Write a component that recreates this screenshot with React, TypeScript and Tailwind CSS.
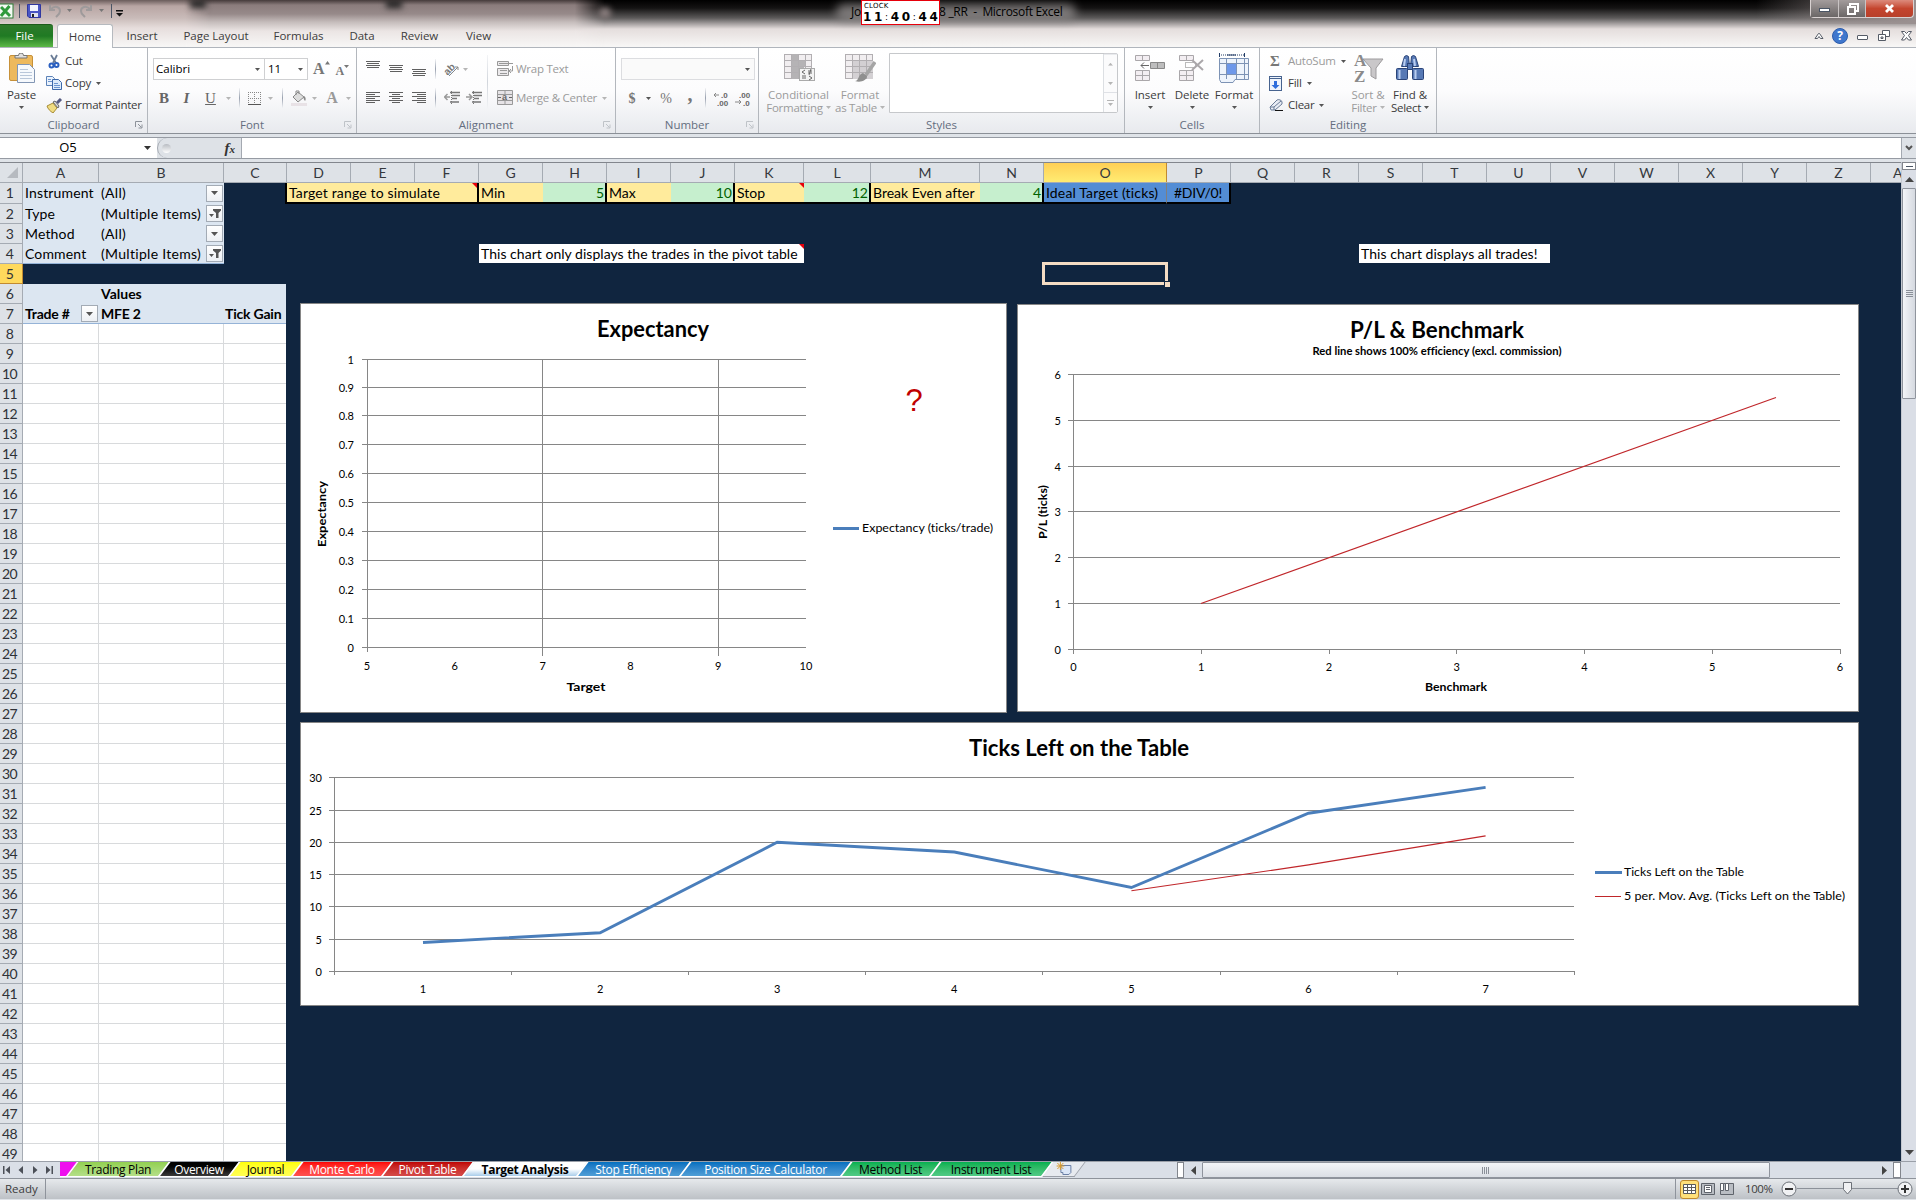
import type { ReactNode } from 'react'

const COLUMNS = [
  { name: 'A', w: 76 }, { name: 'B', w: 125 }, { name: 'C', w: 63 }, { name: 'D', w: 64 },
  { name: 'E', w: 64 }, { name: 'F', w: 64 }, { name: 'G', w: 64 }, { name: 'H', w: 64 },
  { name: 'I', w: 64 }, { name: 'J', w: 64 }, { name: 'K', w: 69 }, { name: 'L', w: 67 },
  { name: 'M', w: 109 }, { name: 'N', w: 64 }, { name: 'O', w: 123 }, { name: 'P', w: 64 },
  { name: 'Q', w: 64 }, { name: 'R', w: 64 }, { name: 'S', w: 64 }, { name: 'T', w: 64 },
  { name: 'U', w: 64 }, { name: 'V', w: 64 }, { name: 'W', w: 64 }, { name: 'X', w: 64 },
  { name: 'Y', w: 64 }, { name: 'Z', w: 64 }, { name: 'AA', w: 64 },
]

const SHEETS = [
  { name: '', w: 'w-[13px]', color: 'bg-[#ee10ee]' },
  { name: 'Trading Plan', w: 'w-[92px]', color: 'bg-gradient-to-b from-[#92d050] to-[#b4df88] text-black' },
  { name: 'Overview', w: 'w-[70px]', color: 'bg-gradient-to-b from-black to-[#3a3a3a] text-white' },
  { name: 'Journal', w: 'w-[63px]', color: 'bg-gradient-to-b from-[#ffff00] to-[#ffff50] text-black' },
  { name: 'Monte Carlo', w: 'w-[90px]', color: 'bg-gradient-to-b from-[#ff0000] to-[#ff5050] text-white' },
  { name: 'Pivot Table', w: 'w-[81px]', color: 'bg-gradient-to-b from-[#c00000] to-[#d54a4a] text-white' },
  { name: 'Target Analysis', w: 'w-[114px]', color: 'bg-gradient-to-b from-white via-white to-[#a9cdea] text-black font-bold' },
  { name: 'Stop Efficiency', w: 'w-[103px]', color: 'bg-gradient-to-b from-[#0070c0] to-[#4f9ed6] text-white' },
  { name: 'Position Size Calculator', w: 'w-[161px]', color: 'bg-gradient-to-b from-[#0070c0] to-[#4f9ed6] text-white' },
  { name: 'Method List', w: 'w-[89px]', color: 'bg-gradient-to-b from-[#00b050] to-[#50ca85] text-black' },
  { name: 'Instrument List', w: 'w-[112px]', color: 'bg-gradient-to-b from-[#00b050] to-[#50ca85] text-black' },
]

const UI = "font-['Open_Sans',sans-serif]"

function Caret({ dim = false, className = '' }: { dim?: boolean; className?: string }) {
  return (
    <svg width="5" height="3" className={`shrink-0 ${className}`}>
      <path d="M0 0h5L2.500 3z" fill={dim ? '#b5b5b5' : '#555'} />
    </svg>
  )
}

function Slot({ w, children }: { w: string; children?: ReactNode }) {
  return <div className={`${w} shrink-0 h-full flex items-center justify-center`}>{children}</div>
}

function Sep() {
  return <div className="w-px h-5 bg-gradient-to-b from-gray-100 via-gray-400 to-gray-100" />
}

function Group({ w, label, launcher, dim, children }: { w: string; label: string; launcher?: boolean; dim?: boolean; children: ReactNode }) {
  return (
    <div className={`${w} shrink-0 h-full flex flex-col border-r border-[#b3b7bd] relative`}>
      <div className="h-[69px] flex">{children}</div>
      <div className="h-[15px] flex items-center justify-center text-[11.5px] text-[#646d7e]">{label}</div>
      {launcher && (
        <svg width="8" height="8" className="absolute right-1 bottom-1" fill="none" stroke={dim ? '#bfc3c8' : '#8d929a'}>
          <path d="M.5 6V.5H7M3 3l3.500 3.500M7 3.500v3.500H3.500" />
        </svg>
      )}
    </div>
  )
}

function Lines({ rows, className = '' }: { rows: number[][]; className?: string }) {
  return (
    <svg width="14" height="12" className={className}>
      {rows.map(([x, w], i) => (
        <rect key={i} x={x} y={i * 2 + (rows.length === 4 ? 2 : 0)} width={w} height="1" fill="#606060" />
      ))}
    </svg>
  )
}

function GridIcon({ children }: { children?: ReactNode }) {
  return (
    <svg width="32" height="32" viewBox="0 0 32 32">
      <rect x="1.500" y="1.500" width="27" height="24" fill="#f1eef0" stroke="#b2afb2" />
      {children}
      <path d="M8.500 1v25M15.500 1v25M22.500 1v25M1 7.500h28M1 13.500h28M1 19.500h28" stroke="#b2afb2" />
    </svg>
  )
}

function BigButton({ w, icon, top, bottom, dim }: { w: string; icon: ReactNode; top: string; bottom?: string; dim?: boolean }) {
  return (
    <div className={`${w} shrink-0 flex flex-col items-center pt-[5px] text-[11.5px] leading-[13px] tracking-[-0.05px] ${dim ? 'text-[#9b9b9b]' : 'text-[#3b3b3b]'}`}>
      <div className="h-[35px]">{icon}</div>
      <div className="whitespace-nowrap">{top}</div>
      <div className="flex items-center gap-[3px] h-[13px] whitespace-nowrap tracking-[-0.25px]">
        {bottom}
        <Caret dim={dim} />
      </div>
    </div>
  )
}

function SmallButton({ icon, label, caret, dim }: { icon: ReactNode; label: string; caret?: boolean; dim?: boolean }) {
  return (
    <div className={`h-[22px] flex items-center text-[11.5px] tracking-[-0.25px] whitespace-nowrap ${dim ? 'text-[#9b9b9b]' : 'text-[#3b3b3b]'}`}>
      <div className="w-[19px] shrink-0">{icon}</div>
      {label}
      {caret && <Caret className="ml-[5px]" />}
    </div>
  )
}

function TitleBar() {
  return (
    <div className="h-6 relative flex items-center justify-between">
      <div className="flex items-center h-full pb-[2px]">
        <svg width="14" height="16" viewBox="0 0 14 16">
          <rect x="-3" y="1" width="16" height="14" fill="#f3faf3" stroke="#2c7b35" />
          <path d="M1 4l9 9M9.500 3L1 13" stroke="#2f9a3c" strokeWidth="3" />
        </svg>
        <div className="w-px h-3.5 bg-gray-600 ml-[5px]" />
        <svg width="14" height="14" viewBox="0 0 14 14" className="ml-[7px]">
          <path d="M.5.5h13v13H2l-1.500-1.500z" fill="#4a56c4" stroke="#3037a0" />
          <rect x="3" y="1" width="8" height="6" fill="#f3f5ff" />
          <rect x="4" y="9" width="7" height="4" fill="#dfe3ee" />
          <rect x="5" y="10" width="2" height="3" fill="#222" />
        </svg>
        <svg width="60" height="14" viewBox="0 0 60 14" className="ml-[8px]" fill="none" stroke="#9e9a9b" strokeWidth="2">
          <path d="M2 5c4-4 9-2 9 2 0 3-2 4-4 6M1 1v5h5M41 5c-4-4-9-2-9 2 0 3 2 4 4 6M42 1v5h-5" />
          <path d="M18 5h5l-2.500 3zM50 5h5l-2.500 3z" fill="#777" stroke="none" />
        </svg>
        <div className="w-px h-3.5 bg-gray-600 ml-[2px]" />
        <svg width="7" height="7" className="ml-[4px] mt-1"><path d="M0 0h7v1.500H0zM0 3h7L3.500 6.500z" fill="#111" /></svg>
      </div>
      <div className="absolute left-[836px] top-[4px] w-[240px] h-[17px] rounded-full bg-[#8d8989] opacity-80 blur-[5px]" />
      <div className={`absolute left-[851px] top-[3px] ${UI} text-[12px] leading-[18px] tracking-[-0.3px] text-black flex`}>
        <span className="w-[88px]">Jo</span>
        <span className="whitespace-pre">8 _RR  -  Microsoft Excel</span>
      </div>
      <div className="absolute left-[861px] top-0 w-[79px] h-[25px] bg-white border border-red-600 text-black">
        <div className="font-['DejaVu_Sans',sans-serif] text-[7px] leading-[8px] pl-[2px] pt-[1px] tracking-[0.2px]">CLOCK</div>
        <div className="font-['DejaVu_Sans',sans-serif] font-bold text-[12px] leading-[14px] px-[1px] flex justify-between">
          <span>1</span><span>1</span><span className="font-normal text-[9px]">:</span><span>4</span><span>0</span><span className="font-normal text-[9px]">:</span><span>4</span><span>4</span>
        </div>
      </div>
      <div className="absolute right-[2px] top-0 h-[18px] flex border border-t-0 border-[#d9d2d2] rounded-b">
        <div className="w-[28px] flex items-end justify-center pb-[5px] bg-gradient-to-b from-[#a39c9c] to-[#6b6767] border-r border-[#c9c4c4]">
          <div className="w-[11px] h-[4px] bg-white border border-gray-600" />
        </div>
        <div className="w-[27px] flex items-center justify-center bg-gradient-to-b from-[#a39c9c] to-[#6b6767] border-r border-[#c9c4c4]">
          <svg width="13" height="12" fill="none" stroke="#fff" strokeWidth="2"><path d="M4 3V1h8v7h-2M2 4h7v7H2z" /></svg>
        </div>
        <div className="w-[47px] flex items-center justify-center rounded-br bg-gradient-to-b from-[#dc8a7c] via-[#c4452e] to-[#b8402b]">
          <svg width="11" height="9" stroke="#fff" strokeWidth="2.800"><path d="M2 1l7 7M9 1L2 8" /></svg>
        </div>
      </div>
    </div>
  )
}

function TabRow() {
  return (
    <div className="h-[23px] flex items-end text-[11.5px] text-[#3c3c3c] relative">
      <div className="w-[53px] h-[23px] rounded-tr-[3px] bg-gradient-to-b from-[#2d7a2b] via-[#1f7a23] to-[#5cb947] border-t border-[#1d5c1c] text-white flex items-center justify-center pr-1">File</div>
      <div className="ml-1 w-[56px] h-[24px] -mb-px rounded-t-[3px] bg-white border border-b-0 border-[#b6babf] flex items-center justify-center relative">Home</div>
      <div className="h-full flex items-center">
        <span className="w-[58px] text-center">Insert</span>
        <span className="w-[90px] text-center">Page Layout</span>
        <span className="w-[75px] text-center">Formulas</span>
        <span className="w-[52px] text-center">Data</span>
        <span className="w-[63px] text-center">Review</span>
        <span className="w-[55px] text-center">View</span>
      </div>
      <div className="ml-auto h-full flex items-center pr-[4px]">
        <svg width="10" height="8" fill="#fff" stroke="#555b66"><path d="M1 6.500l3.500-5h1l3.500 5H6.500L5 4.500 3.500 6.500z" /></svg>
        <div className="ml-[8px] w-4 h-4 rounded-full bg-[#3f77cd] border border-[#2c5cab] text-white font-bold text-[12px] leading-[14px] text-center">?</div>
        <div className="ml-[9px] mt-1 w-[11px] h-[5px] border border-[#555b66] bg-white rounded-[1px]" />
        <svg width="12" height="12" className="ml-[10px]" fill="#fff" stroke="#555b66"><path d="M4.500.5h7v6h-7z" /><path d="M.5 4.500h7v6h-7zM3 7h2v1.500H3z" /></svg>
        <svg width="11" height="10" className="ml-[11px]" fill="#fff" stroke="#555b66"><path d="M.5.5h3l2 2 2-2h3L7.500 4.500l3 4.500h-3l-2-2.500-2 2.500h-3l3-4.500z" /></svg>
      </div>
    </div>
  )
}

function FontGroup() {
  return (
    <Group w="w-[209px]" label="Font" launcher dim>
      <div className="flex flex-col pl-[5px] pt-[10px]">
        <div className="h-[22px] flex items-center text-[11.5px] text-black">
          <div className="w-[112px] h-[22px] border border-[#cfd0d2] bg-white flex items-center justify-between pl-[2px] pr-[4px]">Calibri<Caret /></div>
          <div className="w-[43px] h-[22px] border border-l-0 border-[#cfd0d2] bg-white flex items-center justify-between pl-[3px] pr-[4px]">11<Caret /></div>
          <div className="ml-[5px] font-['Liberation_Serif',serif] font-bold text-[16px] leading-none text-[#777] flex">A<svg width="5" height="4"><path d="M0 3.500h5L2.500 0z" fill="#777" /></svg></div>
          <div className="ml-[6px] mt-1 font-['Liberation_Serif',serif] font-bold text-[12px] leading-none text-[#777] flex">A<svg width="5" height="4"><path d="M0 0h5L2.500 3z" fill="#777" /></svg></div>
        </div>
        <div className="h-[22px] mt-[7px] flex items-center font-['Liberation_Serif',serif] text-[15px] text-[#666]">
          <Slot w="w-[22px]"><b>B</b></Slot>
          <Slot w="w-[23px]"><b><i>I</i></b></Slot>
          <Slot w="w-[25px]"><span className="underline">U</span></Slot>
          <Slot w="w-[10px]"><Caret dim /></Slot>
          <Slot w="w-[12px]"><Sep /></Slot>
          <Slot w="w-[18px]"><svg width="13" height="13" stroke="#888" fill="none"><path d="M.5 0v12M6.500 0v12M12.500 0v12M0 .5h13M0 6.500h13" strokeDasharray="1 1" /><path d="M0 12.500h13" stroke="#555" /></svg></Slot>
          <Slot w="w-[14px]"><Caret dim /></Slot>
          <Slot w="w-[10px]"><Sep /></Slot>
          <Slot w="w-[23px]"><svg width="16" height="16"><path d="M2 7l5-5 6 5-6 5z" fill="#ddd" stroke="#888" /><path d="M5 5V1h3v3" fill="none" stroke="#888" /><path d="M13 6c2 1 2 4 1 5-1-1-2-3-1-5z" fill="#888" /><rect y="13" width="16" height="3" fill="#e8e2e6" /></svg></Slot>
          <Slot w="w-[9px]"><Caret dim /></Slot>
          <Slot w="w-[26px]"><b className="text-[16px] text-[#999]">A</b></Slot>
          <Slot w="w-[6px]"><Caret dim /></Slot>
        </div>
      </div>
    </Group>
  )
}

function Indent({ flip }: { flip?: boolean }) {
  return (
    <svg width="16" height="14" fill="none" stroke="#777">
      <path d="M6 1.500h10M8 4.500h8M8 7.500h5M6 11h9" strokeWidth="1.500" />
      <path d="M7.500 0v14" strokeDasharray="1 1" />
      <path d={flip ? 'M0 6h5M3 3l3 3-3 3' : 'M1 6h5M3.500 3l-3 3 3 3'} stroke="#999" strokeWidth="1.500" />
    </svg>
  )
}

function AlignmentGroup() {
  const full = [[0, 14], [1, 12], [0, 14], [1, 12]]
  return (
    <Group w="w-[259px]" label="Alignment" launcher dim>
      <div className="flex flex-col pl-[4px] pt-[10px] w-[130px]">
        <div className="h-[22px] flex items-center">
          <Slot w="w-[23px]"><Lines rows={full} className="-mt-2" /></Slot>
          <Slot w="w-[23px]"><Lines rows={full} /></Slot>
          <Slot w="w-[23px]"><Lines rows={full} className="mt-2" /></Slot>
          <Slot w="w-[10px]"><Sep /></Slot>
          <Slot w="w-[22px]">
            <svg width="17" height="16" className="overflow-visible"><text x="1" y="12" transform="rotate(-45 6 9)" fontSize="10" fontWeight="bold" fill="#777" fontFamily="Liberation Sans">ab</text><path d="M6 15L15 6M12 6h3v3" stroke="#888" fill="none" /></svg>
          </Slot>
          <Slot w="w-[6px]"><Caret dim /></Slot>
        </div>
        <div className="h-[22px] mt-[7px] flex items-center">
          <Slot w="w-[23px]"><Lines rows={[[0, 14], [0, 9], [0, 14], [0, 9], [0, 14], [0, 9]]} /></Slot>
          <Slot w="w-[23px]"><Lines rows={[[0, 14], [3, 8], [0, 14], [3, 8], [0, 14], [3, 8]]} /></Slot>
          <Slot w="w-[23px]"><Lines rows={[[0, 14], [5, 9], [0, 14], [5, 9], [0, 14], [5, 9]]} /></Slot>
          <Slot w="w-[10px]"><Sep /></Slot>
          <Slot w="w-[24px]"><Indent /></Slot>
          <Slot w="w-[20px]"><Indent flip /></Slot>
        </div>
      </div>
      <div className="mt-[7px] w-px h-[54px] bg-gradient-to-b from-gray-100 via-gray-300 to-gray-100" />
      <div className="pl-[9px] pt-[10px] flex flex-col gap-[7px]">
        <SmallButton dim label="Wrap Text" icon={
          <svg width="16" height="16" fill="#eceaec" stroke="#999"><path d="M.5.5h11v4H.5zM.5 7.500h11v7H.5z" /><path d="M2 2.500h14M3 9.500h7M3 12.500h7M15.500 5v5h-3M14 8l-2 2 2 2" fill="none" /></svg>
        } />
        <div className="flex items-center">
          <SmallButton dim label="Merge & Center" icon={
            <svg width="16" height="16" fill="#e6e3e6" stroke="#999"><path d="M.5.5h15v14H.5zM.5 4.500h15M.5 10.500h15M8 0v4M8 11v4" /><path d="M1 7.500h3M12 7.500h3" stroke="#666" /><text x="5" y="10" fontSize="9" fontWeight="bold" fill="#666" stroke="none" fontFamily="Liberation Sans">a</text></svg>
          } />
          <Caret dim className="ml-[5px]" />
        </div>
      </div>
    </Group>
  )
}

function NumberGroup() {
  return (
    <Group w="w-[143px]" label="Number" launcher dim>
      <div className="pl-[5px] pt-[10px]">
        <div className="w-[134px] h-[22px] border border-[#dcdde0] bg-[#fafafa] flex items-center justify-end pr-[4px]"><Caret /></div>
        <div className="h-[22px] mt-[7px] flex items-center font-['Liberation_Serif',serif] text-[14px] text-[#777]">
          <Slot w="w-[22px]"><b>$</b></Slot>
          <Slot w="w-[10px]"><Caret /></Slot>
          <Slot w="w-[26px]">%</Slot>
          <Slot w="w-[22px]"><b className="text-[20px] -mt-2">,</b></Slot>
          <Slot w="w-[8px]"><Sep /></Slot>
          <Slot w="w-[24px]"><svg width="16" height="15" className="overflow-visible" fill="#666" fontFamily="Liberation Sans" fontSize="8" fontWeight="bold"><text x="8" y="7">.0</text><text x="4" y="15">.00</text><path d="M1 4h5M3 2L1 4l2 2" fill="none" stroke="#888" /></svg></Slot>
          <Slot w="w-[20px]"><svg width="16" height="15" className="overflow-visible" fill="#666" fontFamily="Liberation Sans" fontSize="8" fontWeight="bold"><text x="4" y="7">.00</text><text x="8" y="15">.0</text><path d="M0 11h6M4 9l2 2-2 2" fill="none" stroke="#888" /></svg></Slot>
        </div>
      </div>
    </Group>
  )
}

function Ribbon() {
  return (
    <div className="h-[87px] flex border-y border-[#b0b5bc] border-b-[#8b9097] bg-gradient-to-b from-white via-[#fcfcfd] to-[#e8eaee] text-[#3b3b3b]">
      <Group w="w-[148px]" label="Clipboard" launcher>
        <BigButton w="w-[43px]" top="Paste" icon={
          <svg width="28" height="32" viewBox="0 0 28 32">
            <rect x="1.500" y="2.500" width="23" height="25" rx="1.500" fill="#edb95d" stroke="#c79139" />
            <path d="M7 5V2.500h3.500a2.500 2.500 0 0 1 5 0H19V5z" fill="#e0e0e0" stroke="#777" />
            <path d="M9.500 11.500h12l5 5v13h-17z" fill="#f6f9fd" stroke="#8296b4" />
            <path d="M12 16.500h8M12 19.500h12M12 22.500h12M12 25.500h12" stroke="#b9c7da" />
          </svg>
        } />
        <div className="flex flex-col pl-[3px] pt-[2px]">
          <SmallButton label="Cut" icon={
            <svg width="14" height="15" className="ml-[2px]" fill="none"><path d="M3 1l5 8M9 1L5 9" stroke="#6a7c96" strokeWidth="1.800" /><circle cx="3.500" cy="11.500" r="2" stroke="#2a5fc0" strokeWidth="2" /><circle cx="8.500" cy="11" r="2" stroke="#2a5fc0" strokeWidth="2" /></svg>
          } />
          <SmallButton caret label="Copy" icon={
            <svg width="16" height="14"><path d="M.5.5h6l2 2v7h-8z" fill="#eaf2fc" stroke="#5c82b8" /><path d="M6.500 3.500h6l3 3v7h-9z" fill="#dcebfb" stroke="#3d68a8" /><path d="M2 3.500h3M2 5.500h4M8 7.500h4M8 9.500h6M8 11.500h6" stroke="#6a94cf" /></svg>
          } />
          <SmallButton label="Format Painter" icon={
            <svg width="17" height="15"><path d="M1 8l6-3 4 5-4 5C4 13 2 11 1 8z" fill="#f0dc82" stroke="#a78c35" /><path d="M7 4l2-1 4 5-1 2z" fill="#ddd" stroke="#666" /><path d="M11 5l4-4" stroke="#555a80" strokeWidth="3" /></svg>
          } />
        </div>
      </Group>
      <FontGroup />
      <AlignmentGroup />
      <NumberGroup />
      <Group w="w-[366px]" label="Styles">
        <div className="w-[7px]" />
        <BigButton dim w="w-[65px]" top="Conditional" bottom="Formatting" icon={
          <div className="relative">
            <GridIcon><path d="M9 1h6v25H9zM16 8h6v5h-6zM16 14h5v5h-5z" fill="#b5b3b5" /></GridIcon>
            <svg width="16" height="14" className="absolute right-0 top-[15px]"><rect x=".5" y=".5" width="15" height="12" fill="#f3f3f3" stroke="#aaa" /><path d="M6 2L3 4l3 2M3 8h4M3 10h4M9 3h4M9 5h4M12 1l-2 6M10 8l3 2-3 2" stroke="#666" fill="none" /></svg>
          </div>
        } />
        <BigButton dim w="w-[58px]" top="Format" bottom="as Table" icon={
          <div className="relative">
            <GridIcon><path d="M9 8h20v18H9z" fill="#d3d0d3" /></GridIcon>
            <svg width="22" height="22" className="absolute right-0 top-[8px]"><path d="M21 1L12 14" stroke="#a5a5a5" strokeWidth="3.500" /><path d="M1 20c4 0 3-7 8-8l4 3c0 4-6 7-12 5z" fill="#8f8f8f" /></svg>
          </div>
        } />
        <div className="mt-[5px] w-[229px] h-[60px] border border-[#c6c8cb] bg-white flex rounded-r-[2px]">
          <div className="flex-1" />
          <div className="w-[14px] border-l border-[#dcdfe3] flex flex-col divide-y divide-[#dfe1e6] bg-[#fbfbfc]">
            <div className="flex-1 flex items-center justify-center rotate-180"><Caret dim /></div>
            <div className="flex-1 flex items-center justify-center"><Caret dim /></div>
            <div className="flex-1 flex flex-col gap-[2px] items-center justify-center"><div className="w-[7px] h-px bg-[#b5b5b5]" /><Caret dim /></div>
          </div>
        </div>
      </Group>
      <Group w="w-[135px]" label="Cells">
        <div className="w-[4px]" />
        <BigButton w="w-[42px]" top="Insert" icon={
          <svg width="32" height="32" viewBox="0 0 32 32" fill="#f3eef2" stroke="#aaa7aa">
            <path d="M1.500 2.500h14v5h-14zM8.500 2v6M1.500 17.500h14v10h-14zM8.500 17v11M1 22.500h15" /><path d="M16.500 9.500h14v6h-14z" fill="#bdbdbd" stroke="#888" /><path d="M23.500 9v7" stroke="#888" /><path d="M7 12.500h8M10 9.500l-3 3 3 3" fill="none" stroke="#666" />
          </svg>
        } />
        <BigButton w="w-[42px]" top="Delete" icon={
          <svg width="28" height="32" viewBox="0 0 28 32" fill="#f3eef2" stroke="#aaa7aa">
            <path d="M1.500 2.500h14v5h-14zM8.500 2v6M1.500 17.500h14v10h-14zM8.500 17v11M1 22.500h15" /><path d="M7.500 9.500h10v5h-10z" fill="none" strokeDasharray="1 1" stroke="#777" /><path d="M14 7l11 10M25 7L14 17" strokeWidth="2" />
          </svg>
        } />
        <BigButton w="w-[42px]" top="Format" icon={
          <svg width="32" height="32" viewBox="0 0 32 32" fill="#eef4fc" stroke="#7d93b5">
            <path d="M1.500 5.500h29v21H17l-2 3H3l-1.500-3z" /><path d="M9 11h9v11H9z" fill="#6d98ea" stroke="none" /><path d="M8.500 5v21M18.500 5v21M26.500 5v21M1 10.500h30M1 21.500h30" /><path d="M1.500 0v4M26.500 0v4M9 2h9" stroke="#223c66" /><path d="M3 2h23" strokeDasharray="1 1" stroke="#223c66" />
          </svg>
        } />
      </Group>
      <Group w="w-[177px]" label="Editing">
        <div className="flex flex-col pl-[9px] pt-[2px] w-[87px]">
          <SmallButton dim caret label="AutoSum" icon={<span className="font-['Liberation_Serif',serif] font-bold text-[15px] pl-[1px] text-[#777]">Σ</span>} />
          <SmallButton caret label="Fill" icon={<svg width="13" height="15"><rect x=".5" y=".5" width="12" height="14" fill="#eef4fc" stroke="#47638f" /><path d="M1 2.500h11" stroke="#47638f" /><path d="M5 5h3v4h2.500l-4 4-4-4H5z" fill="#2d6ddc" /></svg>} />
          <SmallButton caret label="Clear" icon={<svg width="15" height="14"><path d="M1 9l7-7c1-1 5 0 5 2v2l-7 6H2z" fill="#e8ecf4" stroke="#6b7c98" /><path d="M1 9h4l7-6M5 9v3" fill="none" stroke="#6b7c98" /><path d="M6 12.500h8" stroke="#111" /></svg>} />
        </div>
        <BigButton dim w="w-[42px]" top="Sort &" bottom="Filter" icon={
          <svg width="32" height="32" viewBox="0 0 32 32"><path d="M11 6h20l-7 9v11l-5-3v-8z" fill="#c9c7c9" stroke="#9d9b9d" /><g fontFamily="Liberation Serif" fontWeight="bold" fontSize="17" fill="#8a8a8a"><text x="2" y="13">A</text><text x="2" y="29">Z</text></g></svg>
        } />
        <BigButton w="w-[42px]" top="Find &" bottom="Select" icon={
          <svg width="28" height="30" viewBox="0 -1 28 30" fill="#5779b5" stroke="#2b4478">
            <path d="M8.500 2.500q2-2 4 0l1 10h-8zM15.500 2.500q2-2 4 0l3 10h-8z" /><rect x="11.500" y="9.500" width="5" height="6" /><rect x=".5" y="14.500" width="11" height="11" rx="1" /><rect x="16.500" y="14.500" width="11" height="11" rx="1" /><path d="M3.500 16v9M19.500 16v9M9 5l-1 7M18 5l1 7" stroke="#b9cdf0" strokeWidth="2" />
          </svg>
        } />
      </Group>
    </div>
  )
}

function FormulaBar() {
  return (
    <div className="h-[28px] bg-[#dfe3e8] pt-[3px] shrink-0">
      <div className="h-[22px] flex border-y border-[#969ba3] bg-[#dee2e7]">
        <div className="w-[157px] bg-white flex items-center text-[13px] text-black">
          <div className="w-[136px] text-center">O5</div>
          <svg width="7" height="4" className="ml-[8px]"><path d="M0 0h7L3.500 4z" fill="#333" /></svg>
        </div>
        <div className="w-[85px] border border-y-0 border-[#a4a9b1] rounded-l-[10px] flex items-center justify-between pl-[4px] pr-[6px]">
          <div className="w-[9px] h-[9px] rounded-full bg-gradient-to-b from-[#b8bcc2] to-white" />
          <div className="font-['Liberation_Serif',serif] italic font-bold text-[15px] leading-none text-[#333]">f<span className="text-[11px]">x</span></div>
        </div>
        <div className="flex-1 bg-white" />
        <div className="w-[15px] border-l border-[#a4a9b1] flex items-center justify-center">
          <svg width="8" height="6" fill="none" stroke="#555" strokeWidth="2"><path d="M1 1l3 3 3-3" /></svg>
        </div>
      </div>
    </div>
  )
}

function RowHead({ n }: { n: number }) {
  const sel = n === 5
  return (
    <div className={`w-[23px] shrink-0 border-r border-b flex items-center justify-center text-[14px] pr-[3px] tracking-[-0.5px] ${sel ? 'bg-[#ffd95c] border-[#c28a30]' : 'bg-[#dee2e7] border-[#a5abb3]'} text-[#2f3237]`}>
      {n}
    </div>
  )
}

function FilterButton({ funnel }: { funnel?: boolean }) {
  return (
    <div className="w-[17px] h-[17px] shrink-0 border border-[#a3abb5] bg-gradient-to-b from-white to-[#edf0f4] flex items-center justify-center">
      {funnel
        ? <svg width="12" height="9" fill="#555"><path d="M4 0h8v1.500L9.500 4v5H7V4L4 1.500zM0 5h5L2.500 8z" /></svg>
        : <svg width="7" height="4"><path d="M0 0h7L3.500 4z" fill="#555" /></svg>}
    </div>
  )
}

function Comment() {
  return <div className="absolute right-0 top-0 border-t-[5px] border-l-[5px] border-t-red-600 border-l-transparent" />
}

function Input({ w, name, value, vw, note }: { w: string; name: string; value?: string; vw?: string; note?: boolean }) {
  return (
    <>
      <div className={`${w} relative bg-[#ffeb9c] pl-[2px] border-b-2 border-black whitespace-nowrap ${value ? '' : 'border-r-2 tracking-[0.15px]'}`}>{name}{note && <Comment />}</div>
      {value && <div className={`${vw} bg-[#c6efce] text-[#006100] text-right pr-px border-b-2 border-r-2 border-black`}>{value}</div>}
    </>
  )
}

function SheetRow({ n }: { n: number }) {
  const filters = [['Instrument', '(All)'], ['Type', '(Multiple Items)'], ['Method', '(All)'], ['Comment', '(Multiple Items)']]
  const f = filters[n - 1]
  return (
    <div className={`flex shrink-0 leading-[20px] ${n === 1 ? 'h-[21px]' : 'h-5'}`}>
      <RowHead n={n} />
      {f && (
        <div className={`w-[201px] flex items-center bg-[#dce6f1] border-b pr-px ${n === 4 ? 'border-[#95b3d7]' : 'border-transparent'}`}>
          <div className="w-[76px] pl-[2px] tracking-[0.15px]">{f[0]}</div>
          <div className="flex-1 pl-[2px] whitespace-nowrap tracking-[0.3px]">{f[1]}</div>
          <FilterButton funnel={n % 2 === 0} />
        </div>
      )}
      {n === 1 && (
        <>
          <div className="w-[63px] border-r-2 border-black" />
          <Input w="w-[192px]" name="Target range to simulate" note />
          <Input w="w-[64px]" name="Min" vw="w-[64px]" value="5" />
          <Input w="w-[64px]" name="Max" vw="w-[64px]" value="10" />
          <Input w="w-[69px]" name="Stop" vw="w-[67px]" value="12" note />
          <Input w="w-[109px]" name="Break Even after" vw="w-[64px]" value="4" />
          <div className="w-[123px] bg-[#538dd5] border-b-2 border-b-black border-r border-r-[#7f7f7f] pl-[2px] whitespace-nowrap tracking-[0.15px]">Ideal Target (ticks)</div>
          <div className="w-[64px] bg-[#538dd5] border-b-2 border-r-2 border-black text-center tracking-[-0.2px]">#DIV/0!</div>
        </>
      )}
      {n === 4 && (
        <>
          <div className="ml-[255px] w-[325px] h-[19px] relative bg-white pl-[2px] tracking-[0.03px] leading-[19px] whitespace-nowrap">This chart only displays the trades in the pivot table<Comment /></div>
          <div className="ml-[555px] w-[191px] h-[19px] bg-white pl-[2px] leading-[19px] tracking-[0.04px]">This chart displays all trades!</div>
        </>
      )}
      {n === 6 && <div className="w-[263px] bg-[#dce6f1] font-bold pl-[78px]">Values</div>}
      {n === 7 && (
        <div className="w-[263px] bg-[#dce6f1] border-b border-[#95b3d7] font-bold flex items-center tracking-[-0.2px]">
          <div className="w-[58px] shrink-0 pl-[2px]">Trade #</div>
          <FilterButton />
          <div className="w-[127px] shrink-0 pl-[3px]">MFE 2</div>
          <div className="whitespace-nowrap">Tick Gain</div>
        </div>
      )}
      {n > 7 && (
        <div className="w-[263px] flex bg-white">
          <div className="w-[76px] border-r border-b border-[#d8dadc]" />
          <div className="w-[125px] border-r border-b border-[#d8dadc]" />
          <div className="w-[62px] border-b border-[#d8dadc]" />
        </div>
      )}
    </div>
  )
}

function Label({ x, y, children, w, size = 11, bold, anchor = 'middle', rotate }: { x: number; y: number; children: string; w?: number; size?: number; bold?: boolean; anchor?: 'start' | 'middle' | 'end'; rotate?: boolean }) {
  return (
    <text x={x} y={y} fontSize={size} fontWeight={bold ? 700 : 400} textAnchor={anchor} textLength={w} lengthAdjust="spacingAndGlyphs" transform={rotate ? `rotate(-90 ${x} ${y})` : undefined}>
      {children}
    </text>
  )
}

function ExpectancyChart() {
  return (
    <svg width="707" height="410" className="absolute left-[300px] top-[120px] bg-white border border-[#868686]">
      <Label x={352} y={33} size={22} w={112} bold>Expectancy</Label>
      {Array.from({ length: 11 }, (_, i) => {
        const y = Math.round(54.6 + i * 28.94) + 0.5 - (i > 0 ? 1 : 0)
        return (
          <g key={i}>
            <path d={`M61 ${y}H505`} stroke="#868686" />
            <Label x={53} y={y + 4} anchor="end">{String((10 - i) / 10)}</Label>
          </g>
        )
      })}
      <path d="M66.500 55v293M241.500 55v297M417.500 55v297" stroke="#868686" />
      {[5, 6, 7, 8, 9, 10].map((n, i) => <Label key={n} x={66 + i * 87.8} y={366}>{String(n)}</Label>)}
      <Label x={285} y={387} size={12} w={39} bold>Target</Label>
      <Label x={25} y={210} size={12} w={66} bold rotate>Expectancy</Label>
      <text x="613" y="107" fontSize="31" fill="#c00000" textAnchor="middle" fontFamily="Liberation Sans">?</text>
      <path d="M532 224.500h26" stroke="#4a7ebb" strokeWidth="3" />
      <Label x={561} y={228} w={131} anchor="start">Expectancy (ticks/trade)</Label>
    </svg>
  )
}

function BenchmarkChart() {
  return (
    <svg width="842" height="408" className="absolute left-[1017px] top-[121px] bg-white border border-[#868686]">
      <Label x={419} y={33} size={22} w={174} bold>P/L & Benchmark</Label>
      <Label x={419} y={50} size={11} w={249} bold>Red line shows 100% efficiency (excl. commission)</Label>
      {Array.from({ length: 7 }, (_, i) => {
        const y = Math.round(69 + i * 45.8) + 0.5
        const x = 55 + i * 127.75
        return (
          <g key={i}>
            <path d={`M50 ${y}H822`} stroke="#868686" />
            <path d={`M${Math.round(x) + 0.5} 344v5`} stroke="#868686" />
            <Label x={43} y={y + 4} anchor="end">{String(6 - i)}</Label>
            <Label x={x + 0.5} y={366}>{String(i)}</Label>
          </g>
        )
      })}
      <path d="M55.500 69v275" stroke="#868686" />
      <path d="M183 298.500L758 92.500" stroke="#c0262a" strokeWidth="1.200" />
      <Label x={438} y={386} size={11} w={62} bold>Benchmark</Label>
      <Label x={29} y={207} size={11} w={54} bold rotate>P/L (ticks)</Label>
    </svg>
  )
}

function TicksChart() {
  const base = 248.5
  const px = (i: number) => 122 + i * 177.1
  const py = (v: number) => base - v * 6.46
  const ticks = [4.5, 6, 20, 18.5, 13, 24.5, 28.5]
  const avg = [12.5, 16.5, 21]
  return (
    <svg width="1559" height="284" className="absolute left-[300px] top-[539px] bg-white border border-[#868686]">
      <Label x={778} y={33} size={22} w={220} bold>Ticks Left on the Table</Label>
      {Array.from({ length: 7 }, (_, i) => {
        const y = Math.floor(base - i * 32.3) + 0.5
        return (
          <g key={i}>
            <path d={`M28 ${y}H1273`} stroke="#868686" />
            <Label x={21} y={y + 4} anchor="end">{String(i * 5)}</Label>
            <Label x={px(i)} y={270}>{String(i + 1)}</Label>
          </g>
        )
      })}
      <path d="M33.500 55v194" stroke="#868686" />
      {Array.from({ length: 8 }, (_, i) => <path key={i} d={`M${Math.round(33 + i * 177.1) + 0.5} 248v4`} stroke="#868686" />)}
      <polyline points={ticks.map((v, i) => `${px(i)},${py(v)}`).join(' ')} fill="none" stroke="#4a7ebb" strokeWidth="2.900" />
      <polyline points={avg.map((v, i) => `${px(i + 4)},${py(v)}`).join(' ')} fill="none" stroke="#c0262a" strokeWidth="1.200" />
      <path d="M1294 149.500h27" stroke="#4a7ebb" strokeWidth="3" />
      <path d="M1294 173.500h26" stroke="#c0262a" />
      <Label x={1323} y={153} w={120} anchor="start">Ticks Left on the Table</Label>
      <Label x={1323} y={177} w={221} anchor="start">5 per. Mov. Avg. (Ticks Left on the Table)</Label>
    </svg>
  )
}

function VerticalScroll() {
  return (
    <div className="w-[15px] shrink-0 flex flex-col bg-[#dadee6] border-l border-[#c3c8d0]">
      <div className="h-[8px] border border-[#82868d] bg-white flex items-center justify-center"><div className="w-[7px] h-px bg-gray-600" /></div>
      <div className="h-[18px] flex items-center justify-center"><svg width="9" height="5"><path d="M0 5h9L4.500 0z" fill="#444" /></svg></div>
      <div className="h-[211px] border border-[#8f949d] rounded-[1px] bg-gradient-to-r from-[#f3f5f8] to-[#d5d9e0] flex items-center justify-center">
        <svg width="7" height="8" stroke="#8a8f98"><path d="M0 .5h7M0 2.500h7M0 4.500h7M0 6.500h7" /></svg>
      </div>
      <div className="flex-1" />
      <div className="h-[18px] flex items-center justify-center"><svg width="9" height="5"><path d="M0 0h9L4.500 5z" fill="#444" /></svg></div>
    </div>
  )
}

function Sheet() {
  return (
    <div className="h-[999px] shrink-0 flex font-['Lato',sans-serif] [font-variant-ligatures:none] text-[14px] text-black">
      <div className="w-[1901px] overflow-hidden">
        <div className="flex h-[21px] border-t border-b border-t-[#82868d] border-b-[#a5abb3] bg-[#dee2e7]">
          <div className="w-[23px] shrink-0 border-r border-[#a5abb3] flex items-end justify-end p-1">
            <svg width="11" height="11"><path d="M11 0v11H0z" fill="#b6bac0" /></svg>
          </div>
          {COLUMNS.map((c) => (
            <div key={c.name} style={{ width: c.w }} className={`shrink-0 border-r flex items-center justify-center ${c.name === 'O' ? 'bg-gradient-to-b from-[#ffcf55] to-[#ffec72] border-[#c28a30]' : 'border-[#a5abb3]'} text-[#35383d]`}>
              {c.name}
            </div>
          ))}
        </div>
        <div className="relative h-[978px] overflow-hidden bg-[#10253f]">
          {Array.from({ length: 49 }, (_, i) => <SheetRow key={i} n={i + 1} />)}
          <div className="absolute left-[1042px] top-[79px] w-[126px] h-[23px] border-[3px] border-[#f4dcc3]">
            <div className="absolute -right-[5px] -bottom-[5px] w-[6px] h-[6px] bg-[#f4dcc3] border-l border-t border-[#10253f]" />
          </div>
          {/* Charts float over the cells, offset from the top left of row 1 */}
          <ExpectancyChart />
          <BenchmarkChart />
          <TicksChart />
        </div>
      </div>
      <VerticalScroll />
    </div>
  )
}

function SheetTabs() {
  return (
    <div className="h-[17px] shrink-0 flex bg-[#dadfe7] border-t border-[#9a9fa8] text-[12px]">
      <svg width="60" height="16" fill="#4c5058" className="shrink-0">
        <path d="M3 4h1.500v8H3zM10 4v8L5.500 8zM23 4v8l-4.500-4zM33 4v8l4.500-4zM46 4v8l4.500-4zM51.500 4H53v8h-1.500z" />
      </svg>
      <div className="h-[16px] w-[1117px] shrink-0 overflow-hidden flex">
        {SHEETS.map((s) => (
          <div key={s.name} className={`${s.w} shrink-0 h-[15px] -skew-x-[37deg] border-r-2 border-b border-white ${s.name ? '' : 'shadow-[-12px_0_0_#ee10ee]'} ${s.color}`}>
            <div className="skew-x-[37deg] text-center leading-[15px] whitespace-nowrap tracking-[-0.3px]">{s.name}</div>
          </div>
        ))}
        <div className="w-[32px] h-[15px] -skew-x-[37deg] border-r border-b border-[#9a9fa8] bg-[#e7eaef] flex items-center justify-center">
          <svg width="16" height="14" className="skew-x-[37deg]"><path d="M4.500 3.500h10v7l-2 2h-6v-2h-2z" fill="#dbe6f7" stroke="#6a7fa5" /><path d="M4 0v8M0 4h8M1 1l6 6M7 1L1 7" stroke="#d99a2b" /></svg>
        </div>
      </div>
      <div className="w-[7px] h-[16px] border border-[#82868d] bg-white" />
      <div className="w-[18px] flex items-center justify-center"><svg width="5" height="9"><path d="M5 0v9L0 4.500z" fill="#444" /></svg></div>
      <div className="w-[568px] border border-[#8f949d] rounded-[1px] bg-gradient-to-b from-[#f3f5f8] to-[#dbdfe5] flex items-center justify-center">
        <svg width="8" height="7" stroke="#8a8f98"><path d="M.5 0v7M2.500 0v7M4.500 0v7M6.500 0v7" /></svg>
      </div>
      <div className="flex-1 flex items-center justify-end pr-[6px]"><svg width="5" height="9"><path d="M0 0v9l5-4.500z" fill="#444" /></svg></div>
      <div className="w-[8px] border border-[#82868d] bg-white" />
      <div className="w-[15px]" />
    </div>
  )
}

function StatusBar() {
  return (
    <div className="h-[21px] shrink-0 border-t border-[#8e939b] bg-gradient-to-b from-[#e6e9ec] to-[#bdc1c6] flex items-center text-[11.5px] text-[#3c3c3c]">
      <div className="w-[46px] h-full border-r border-[#8e939b] flex items-center pl-[5px]">Ready</div>
      <div className="ml-auto h-full flex items-center border-l border-[#8e939b] pl-[4px]">
        <div className="w-[19px] h-[19px] rounded-[3px] border border-[#c08a2c] bg-[#ffe07a] flex items-center justify-center">
          <svg width="13" height="11" fill="#fff" stroke="#5b5b5b"><path d="M.5.5h12v9H.5zM.5 3.500h12M.5 6.500h12M4.500 0v10M8.500 0v10" /></svg>
        </div>
        <svg width="14" height="12" className="ml-[2px]" fill="#b9bdc3" stroke="#5e636b"><path d="M.5.5h13v11H.5z" /><path d="M3.500 2.500h7v7h-7z" fill="#fff" /><path d="M5 4.500h4M5 6.500h4" /></svg>
        <svg width="14" height="12" className="ml-[5px]" fill="#b9bdc3" stroke="#5e636b"><path d="M.5.5h13v11H.5z" /><path d="M.5.5h3v7h-3zM5.500.5h3v7h-3z" fill="#fff" /></svg>
        <span className="ml-[11px] w-[35px] tracking-[-0.4px]">100%</span>
        <svg width="135" height="18" className="ml-[1px]" fill="none" stroke="#6c7178">
          <path d="M16 8.500h102" stroke="#8c9199" />
          <circle cx="8" cy="9" r="7" fill="#f0f1f3" /><path d="M4 9h8" stroke="#333" strokeWidth="2" />
          <path d="M62.500 2.500h8v7l-4 4.500-4-4.500z" fill="#f0f1f3" />
          <circle cx="124" cy="9" r="7" fill="#f0f1f3" /><path d="M120 9h8M124 5v8" stroke="#333" strokeWidth="2" />
        </svg>
      </div>
    </div>
  )
}

export default function App() {
  return (
    <div className={`w-[1916px] h-[1200px] overflow-hidden flex flex-col bg-[#dfe3e8] ${UI}`}>
      <div className="h-[47px] shrink-0 relative bg-[linear-gradient(to_bottom,#000_0px,#141313_8px,#5c5a5a_18px,#a8a3a3_24px,#e4dddc_29px,#f7f6f5_46px)]">
        <div className="absolute inset-y-0 left-0 w-[605px] bg-[linear-gradient(to_bottom,#453b3b_0px,#8a7c7c_5px,#978a8a_14px,#c5bcbb_22px,#ebe5e4_31px,#f7f6f5_46px)] [mask-image:linear-gradient(to_right,#000_95%,transparent)]" />
        <div className="absolute inset-y-0 left-0 w-[210px] bg-[linear-gradient(to_bottom,#6a5c5b_0px,#b8a5a3_6px,#c9bbb9_18px,#e6dddc_28px,#f7f6f5_46px)] [mask-image:linear-gradient(to_right,#000_88%,transparent)]" />
        <div className="absolute top-0 left-[190px] w-4 h-2 bg-[#222] blur-[3px]" />
        <div className="absolute top-0 left-[386px] w-4 h-2 bg-[#222] blur-[3px]" />
        <div className="absolute top-[7px] left-[599px] w-3 h-3 rounded-full bg-[#8d8080] blur-[3px]" />
        <div className="absolute top-0 right-0 w-[160px] h-6 bg-gradient-to-r from-transparent to-[#9a9090]" />
        <TitleBar />
        <TabRow />
      </div>
      <div className="shrink-0"><Ribbon /></div>
      <FormulaBar />
      <Sheet />
      <SheetTabs />
      <StatusBar />
    </div>
  )
}
